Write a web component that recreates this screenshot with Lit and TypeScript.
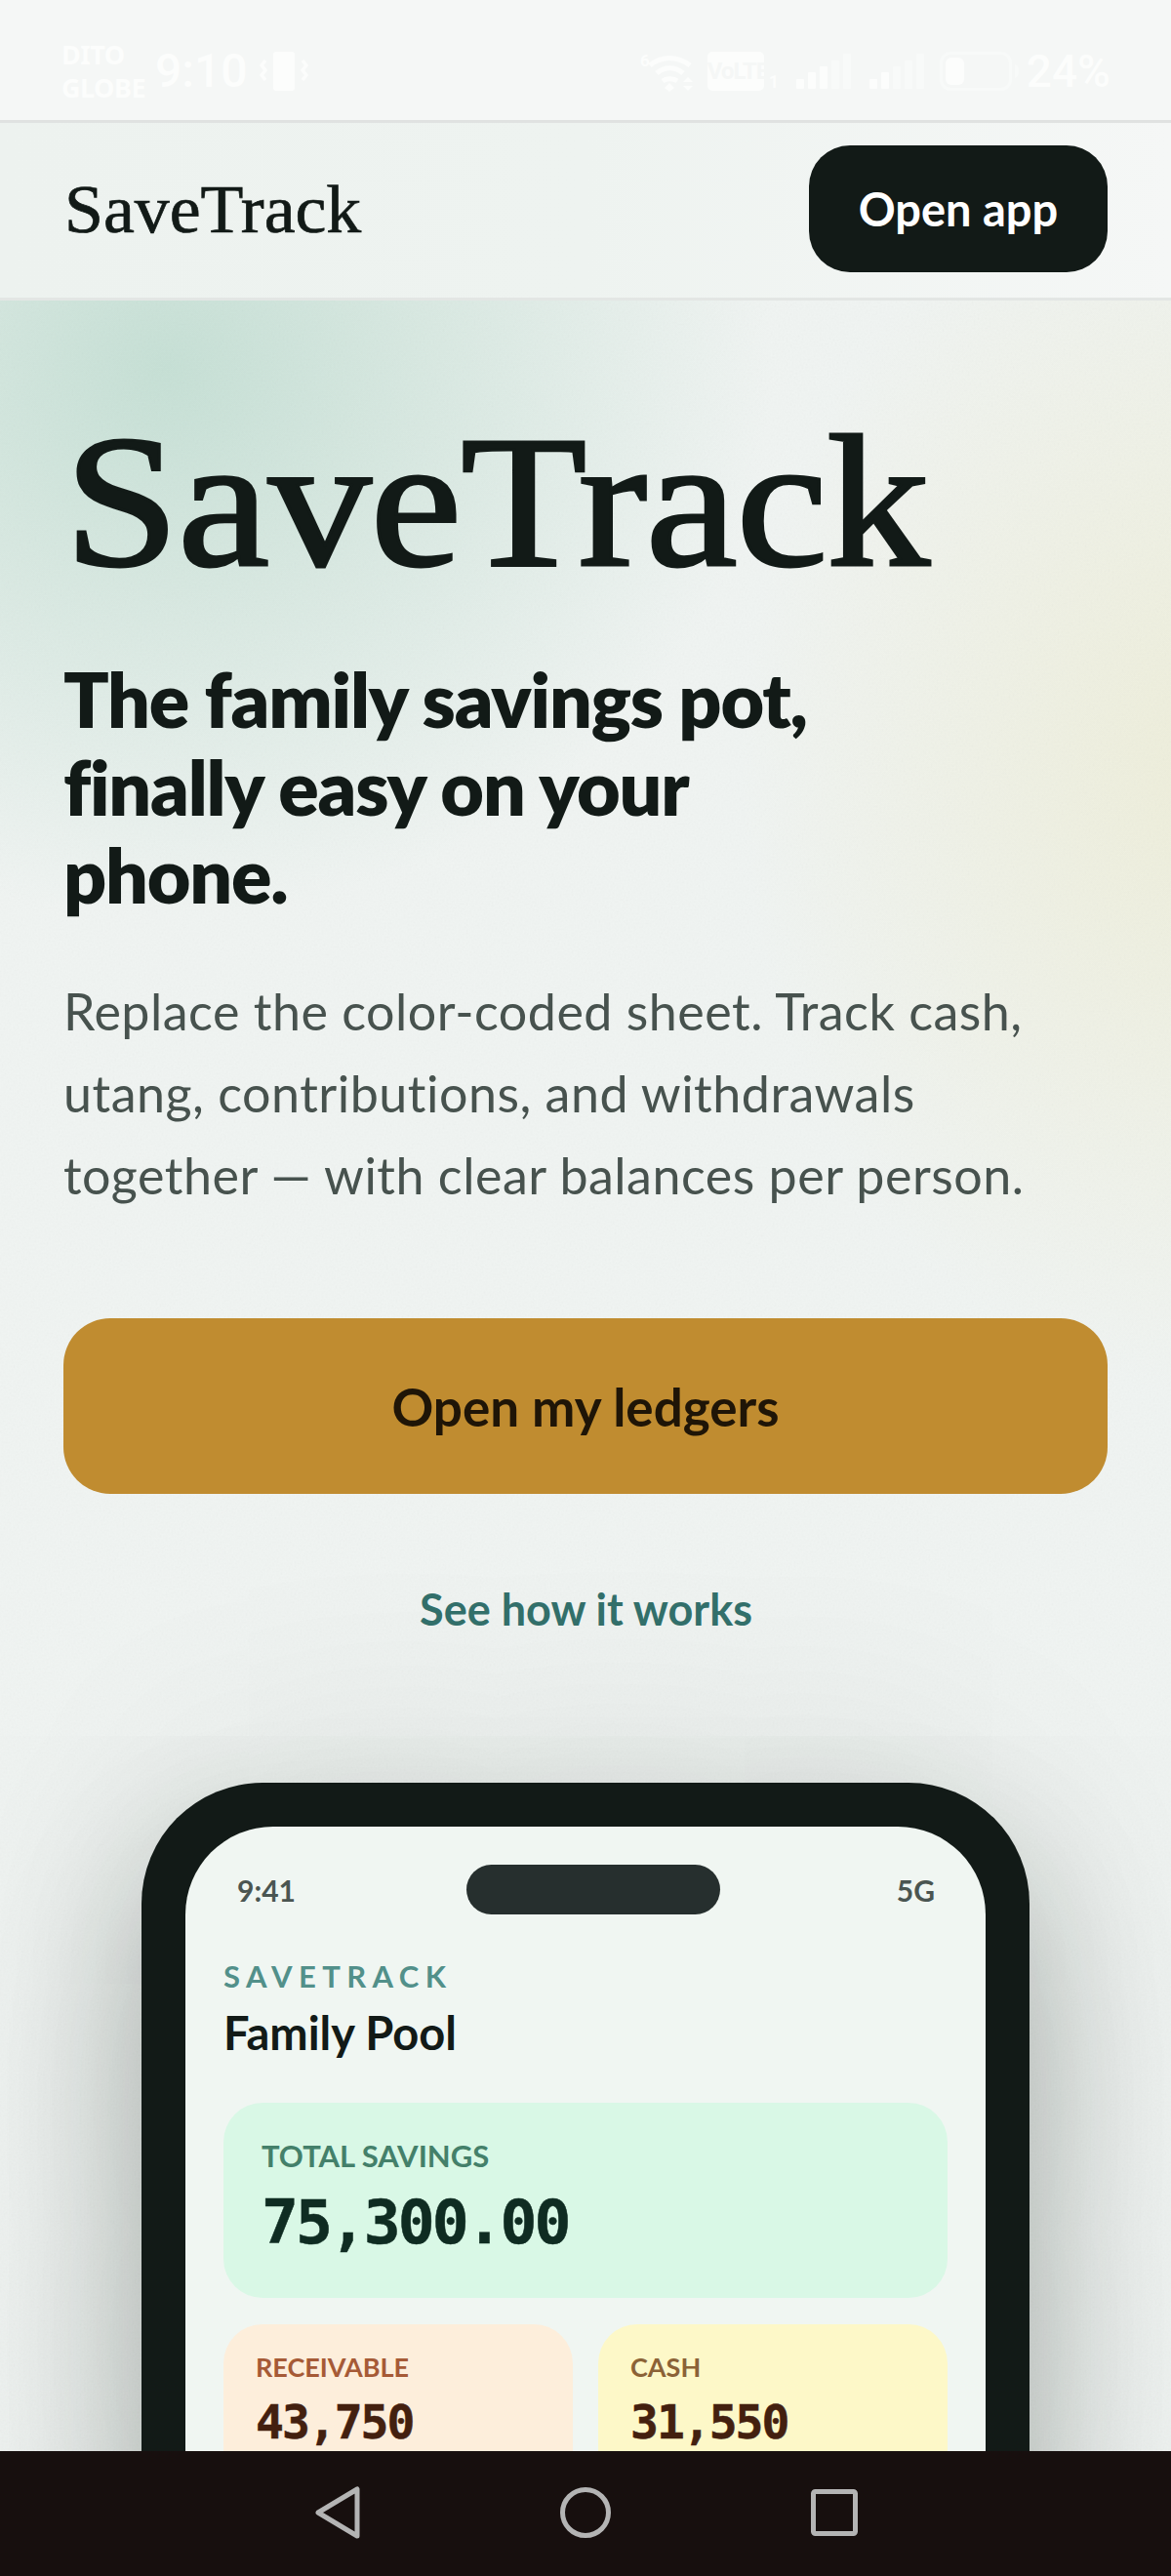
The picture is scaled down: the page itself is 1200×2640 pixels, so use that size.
import { LitElement, html, css } from 'lit';
import { customElement } from 'lit/decorators.js';

@customElement('app-root')
export class AppRoot extends LitElement {
  static styles = css`
    :host {
      display: block;
      width: 1200px;
      height: 2640px;
      overflow: hidden;
      font-family: 'Lato', 'Noto Sans', sans-serif;
      color: #121a17;
    }
    * { box-sizing: border-box; }
    .page { display: flex; flex-direction: column; height: 2640px; }

    .status {
      height: 126px;
      flex: none;
      background: #f5f7f6;
      border-bottom: 3px solid #e0e2e1;
      display: flex;
      align-items: center;
      padding: 22px 62px 0 63px;
      color: #fcfdfc;
    }
    .carrier { font-size: 27px; line-height: 34px; font-weight: 700; width: 96px; font-family: 'Noto Sans', sans-serif; letter-spacing: -0.5px; }
    .clock { font-size: 48px; font-weight: 500; font-family: 'Roboto', sans-serif; width: 107px; }
    .status-right { margin-left: auto; display: flex; align-items: center; gap: 13px; }
    .volte {
      width: 58px; height: 40px; border-radius: 5px; background: #fcfdfc; color: #f5f7f6;
      font: 700 24px/40px 'Roboto', sans-serif; text-align: center; letter-spacing: -1px;
      position: relative;
    }
    .volte i { position: absolute; left: 63px; bottom: 0; font: 700 18px/18px 'Roboto', sans-serif; color: #fcfdfc; letter-spacing: 0; }
    .pct { font-size: 46px; font-weight: 500; font-family: 'Roboto', sans-serif; line-height: 46px; margin-left: -6px; }

    .top {
      height: 182px;
      flex: none;
      background: linear-gradient(90deg, #edf2ef 0%, #eef3f0 50%, #f5f7f6 100%);
      border-bottom: 3px solid #e3e6e4;
      display: flex;
      align-items: center;
      justify-content: space-between;
      padding: 0 65px 3px 66px;
    }
    .logo {
      font-family: 'Liberation Serif', serif;
      font-size: 70px;
      line-height: 1;
      padding-top: 2px;
      -webkit-text-stroke: 0.7px #121a17;
      transform: scaleX(1.025);
      transform-origin: left center;
    }
    .open {
      width: 306px; height: 130px; border-radius: 42px; background: #121a17; color: #fff;
      border: 0; font: 700 47px 'Lato', sans-serif;
    }

    main {
      flex: 1;
      min-height: 0;
      overflow: hidden;
      position: relative;
      padding: 112px 65px 0 66px;
      background:
        radial-gradient(620px 560px at 170px 70px, #c6e0d5 0%, rgba(198, 224, 213, 0) 100%),
        radial-gradient(480px 640px at 1240px 480px, #eeeeda 0%, rgba(238, 238, 218, 0) 100%),
        #f0f4f2;
    }
    .grain { position: absolute; inset: 0; width: 100%; height: 100%; opacity: 0.06; pointer-events: none; }
    h1 {
      margin: 0;
      font: 400 192px/190px 'Liberation Serif', serif;
      letter-spacing: -1px;
      -webkit-text-stroke: 3px #121a17;
      white-space: nowrap;
      transform: scaleX(1.1);
      transform-origin: left center;
      position: relative;
    }
    h2 {
      margin: 61px 0 0 -1px;
      font: 800 77px/90px 'Lato', sans-serif;
      letter-spacing: -1.2px;
      position: relative;
    }
    .lead {
      margin: 53px 0 0 -1px;
      font-size: 52px;
      line-height: 84px;
      letter-spacing: 0.5px;
      white-space: nowrap;
      color: #47524e;
      position: relative;
    }
    .cta {
      display: block;
      width: 1070px;
      height: 180px;
      margin: 105px 0 0 -1px;
      border: 0;
      border-radius: 48px;
      background: #c08c30;
      color: #1f1507;
      font: 700 53px 'Lato', sans-serif;
      position: relative;
    }
    .how {
      margin: 90px 0 0;
      text-align: center;
      font-weight: 700;
      font-size: 45px;
      line-height: 56px;
      color: #33706b;
      position: relative;
    }

    .phone {
      width: 910px;
      height: 1400px;
      margin: 150px 0 0 79px;
      padding: 45px;
      border-radius: 124px;
      background: #121a17;
      box-shadow: 0 90px 150px rgba(18, 26, 23, 0.28), 0 0 240px rgba(18, 26, 23, 0.14);
      position: relative;
    }
    .screen {
      height: 100%;
      border-radius: 90px;
      background: #f0f6f2;
      padding: 39px 39px 0 39px;
    }
    .phone-status { display: flex; align-items: center; justify-content: space-between; height: 51px; padding: 0 13px 0 14px; font-size: 30px; font-weight: 700; color: #4a5551; }
    .island { width: 260px; height: 51px; border-radius: 26px; background: #262f2e; margin-left: -6px; }
    .brand { margin-top: 45px; font-size: 31px; line-height: 36px; font-weight: 700; letter-spacing: 6.4px; color: #52908a; }
    .pool { margin-top: 13px; font-size: 47px; line-height: 54px; font-weight: 700; color: #121a17; }
    .total { margin-top: 45px; height: 200px; border-radius: 40px; background: #d9f8e6; padding: 36px 39px; }
    .total .k { font-size: 31px; line-height: 36px; font-weight: 700; color: #44806a; }
    .total .v { margin-top: 16px; font: 700 63px/70px 'DejaVu Sans Mono', monospace; letter-spacing: -3px; color: #0f2c22; -webkit-text-stroke: 0.5px #0f2c22; }
    .pair { margin-top: 27px; display: grid; grid-template-columns: 358px 358px; gap: 26px; }
    .mini { height: 220px; border-radius: 40px; padding: 28px 33px; }
    .mini .k { font-size: 27px; line-height: 32px; font-weight: 700; }
    .mini .v { margin-top: 13px; font: 700 48px/54px 'DejaVu Sans Mono', monospace; letter-spacing: -2px; color: #43200f; -webkit-text-stroke: 0.5px #43200f; }
    .rec { background: #fdeedb; }
    .rec .k { color: #a65a36; }
    .cash { background: #fdf8c8; }
    .cash .k { color: #8b6236; }

    .nav {
      height: 128px;
      flex: none;
      background: #170f0e;
      display: flex;
      align-items: center;
      justify-content: center;
      gap: 205px;
      padding: 0 0 2px 2px;
    }
  `;

  render() {
    return html`
      <div class="page">
        <div class="status">
          <div class="carrier">DITO<br />GLOBE</div>
          <div class="clock">9:10</div>
          <svg width="50" height="40" viewBox="0 0 50 40" fill="none">
            <rect x="14" y="0" width="22" height="40" rx="3" fill="#fcfdfc" />
            <path d="M6 9l-4 5 4 5-4 5 4 5M44 9l4 5-4 5 4 5-4 5" stroke="#fcfdfc" stroke-width="3.5" />
          </svg>
          <div class="status-right">
            <svg width="56" height="44" viewBox="0 0 56 44" fill="none" stroke="#fcfdfc" stroke-width="5">
              <path d="M10 16C22 6 38 6 51 16M17 24c8-7 19-7 27 0M23 32c4-3 11-3 15 0" />
              <path d="M25 39l5-5 5 5-5 4zM44 33l5-5 5 5zM44 37h10l-5 5z" fill="#fcfdfc" stroke="none" />
              <text x="0" y="17" font-size="17" font-weight="700" font-family="Roboto" fill="#fcfdfc" stroke="none">6</text>
            </svg>
            <div class="volte">VoLTE<i>1</i></div>
            <svg width="58" height="36" viewBox="0 0 58 36" style="margin-left:20px">
              <rect x="0" y="26" width="8" height="10" rx="1" fill="#fcfdfc" />
              <rect x="12" y="19" width="8" height="17" rx="1" fill="#fcfdfc" />
              <rect x="24" y="13" width="8" height="23" rx="1" fill="#fcfdfc" />
              <rect x="36" y="7" width="8" height="29" rx="1" fill="#f8faf9" />
              <rect x="48" y="0" width="8" height="36" rx="1" fill="#f8faf9" />
            </svg>
            <svg width="58" height="36" viewBox="0 0 58 36" style="margin-left:4px">
              <rect x="0" y="26" width="8" height="10" rx="1" fill="#fcfdfc" />
              <rect x="12" y="19" width="8" height="17" rx="1" fill="#fcfdfc" />
              <rect x="24" y="13" width="8" height="23" rx="1" fill="#f8faf9" />
              <rect x="36" y="7" width="8" height="29" rx="1" fill="#f8faf9" />
              <rect x="48" y="0" width="8" height="36" rx="1" fill="#f8faf9" />
            </svg>
            <svg width="82" height="40" viewBox="0 0 82 40" fill="none" style="margin-left:1px">
              <rect x="1.5" y="1.5" width="71" height="37" rx="10" stroke="#f8faf9" stroke-width="3" />
              <rect x="6" y="6" width="19" height="28" rx="6" fill="#fcfdfc" />
              <path d="M77 13c3 1 4 4 4 7s-1 6-4 7z" fill="#f8faf9" />
            </svg>
            <div class="pct">24%</div>
          </div>
        </div>

        <header class="top">
          <div class="logo">SaveTrack</div>
          <button class="open">Open app</button>
        </header>

        <main>
          <svg class="grain">
            <filter id="n"><feTurbulence type="fractalNoise" baseFrequency="0.5" numOctaves="2" /><feColorMatrix type="saturate" values="0" /></filter>
            <rect width="100%" height="100%" filter="url(#n)" />
          </svg>
          <h1>SaveTrack</h1>
          <h2>The family savings pot,<br />finally easy on your<br />phone.</h2>
          <p class="lead">Replace the color-coded sheet. Track cash,<br />utang, contributions, and withdrawals<br />together — with clear balances per person.</p>
          <button class="cta">Open my ledgers</button>
          <div class="how">See how it works</div>

          <div class="phone">
            <div class="screen">
              <div class="phone-status"><span>9:41</span><div class="island"></div><span>5G</span></div>
              <div class="brand">SAVETRACK</div>
              <div class="pool">Family Pool</div>
              <div class="total">
                <div class="k">TOTAL SAVINGS</div>
                <div class="v">75,300.00</div>
              </div>
              <div class="pair">
                <div class="mini rec"><div class="k">RECEIVABLE</div><div class="v">43,750</div></div>
                <div class="mini cash"><div class="k">CASH</div><div class="v">31,550</div></div>
              </div>
            </div>
          </div>
        </main>

        <nav class="nav">
          <svg width="46" height="54" viewBox="0 0 46 54" fill="none" stroke="#b4b4b4" stroke-width="5" stroke-linejoin="round"><path d="M43 3v48L3 27z" /></svg>
          <svg width="52" height="52" viewBox="0 0 52 52" fill="none" stroke="#b4b4b4" stroke-width="5"><circle cx="26" cy="26" r="23.5" /></svg>
          <svg width="48" height="48" viewBox="0 0 48 48" fill="none" stroke="#b4b4b4" stroke-width="5" stroke-linejoin="round"><rect x="2.5" y="2.5" width="43" height="43" rx="2" /></svg>
        </nav>
      </div>
    `;
  }
}
